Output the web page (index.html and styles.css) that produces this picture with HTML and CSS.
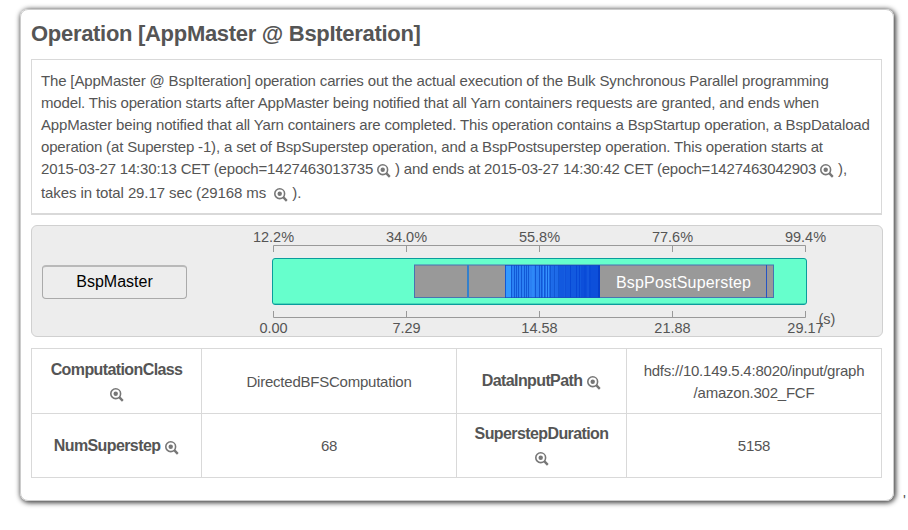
FILE: index.html
```
<!DOCTYPE html>
<html lang="en">
<head>
<meta charset="utf-8">
<title>Operation</title>
<link rel="stylesheet" href="styles.css">
</head>
<body>
<svg class="defs" aria-hidden="true"><symbol id="zoom" viewBox="0 0 14 14"><circle cx="5.7" cy="5.7" r="4.9" fill="none" stroke="#777" stroke-width="1.6"/><circle cx="5.7" cy="5.7" r="2.2" fill="#777"/><path d="M9.200 9.200L12.800 12.800" stroke="#777" stroke-width="2.400"/></symbol></svg>
<div class="page">
<main class="card">
<h1>Operation [AppMaster @ BspIteration]</h1>
<div class="description">
<span class="line">The [AppMaster @ BspIteration] operation carries out the actual execution of the Bulk Synchronous Parallel programming</span>
<span class="line">model. This operation starts after AppMaster being notified that all Yarn containers requests are granted, and ends when</span>
<span class="line">AppMaster being notified that all Yarn containers are completed. This operation contains a BspStartup operation, a BspDataload</span>
<span class="line">operation (at Superstep -1), a set of BspSuperstep operation, and a BspPostsuperstep operation. This operation starts at</span>
<span class="line dates">2015-03-27 14:30:13 CET (epoch=1427463013735 <svg class="icon"><use href="#zoom"/></svg> ) and ends at 2015-03-27 14:30:42 CET (epoch=1427463042903 <svg class="icon"><use href="#zoom"/></svg> ),</span>
<span class="line last">takes in total 29.17 sec (29168 ms &nbsp;<svg class="icon"><use href="#zoom"/></svg> ).</span>
</div>
<section class="chart">
<button class="actor">BspMaster</button>
<svg class="timeline" width="600" height="110" viewBox="250 226 600 110">
<g class="axis"><path d="M273.5 252V245.5H805.5V252M406.5 245V252M539.5 245V252M672.5 245V252M273.5 311V317.5H805.5V311M406.5 311V318M539.5 311V318M672.5 311V318"/></g>
<g class="ticks"><text x="273.5" y="242">12.2%</text><text x="406.5" y="242">34.0%</text><text x="539.5" y="242">55.8%</text><text x="672.5" y="242">77.6%</text><text x="805.5" y="242">99.4%</text>
<text x="273.5" y="333">0.00</text><text x="406.5" y="333">7.29</text><text x="539.5" y="333">14.58</text><text x="672.5" y="333">21.88</text><text x="805.5" y="333">29.17</text><text x="827" y="324">(s)</text></g>
<rect x="272.5" y="258.5" width="534" height="46" rx="2.5" fill="#66ffcc" stroke="#0a9c9c"/>
<path d="M273 303.500H806" stroke="#27b5a5" opacity=".5"/>
<rect x="414.500" y="265" width="359" height="32.500" fill="#999" stroke="#4873b0"/>
<path d="M468 265V298" stroke="#3380cc" stroke-width="2"/>
<rect x="505" y="265" width="95" height="33" fill="#2b80f3"/>
<rect x="506" y="265" width="5" height="33" fill="#3399ff"/>
<rect x="542" y="265" width="17" height="33" fill="#1e6cea"/>
<rect x="559" y="265" width="22" height="33" fill="#1259df"/>
<rect x="581" y="265" width="19" height="33" fill="#0d4fda"/>
<path d="M505.500 265V298M511.500 265V298M514.500 265V298M516.500 265V298M518.500 265V298M521.500 265V298M524.500 265V298M526.500 265V298M528.500 265V298M535.500 265V298M539.500 265V298M541.500 265V298M544.500 265V298M547.500 265V298M550.500 265V298M554.500 265V298M558.500 265V298" stroke="#1158d5"/>
<path d="M533 265V298M543.500 265V298M546.500 265V298M548.500 265V298" stroke="#3391fc"/>
<path d="M565.500 265V298M570.500 265V298M576.500 265V298M579.500 265V298M585 265V298M590 265V298" stroke="#0748d5"/>
<path d="M553 265V298M557 265V298M565 265V298M588 265V298" stroke="#2068e4" stroke-width=".7"/>
<path d="M599 265V298" stroke="#053fca" stroke-width="2"/>
<path d="M505 265.500H600M505 297.500H600" stroke="#194bbf" opacity=".7"/>
<path d="M766.500 265V298" stroke="#2454c4"/>
<text class="segment" x="683.500" y="288" textLength="135">BspPostSuperstep</text>
</svg>
</section>
<table>
<colgroup><col class="key"><col class="value"><col class="key"><col class="value"></colgroup>
<tr><th>ComputationClass <svg class="icon"><use href="#zoom"/></svg></th><td>DirectedBFSComputation</td><th>DataInputPath <svg class="icon"><use href="#zoom"/></svg></th><td>hdfs://10.149.5.4:8020/input/graph<br>/amazon.302_FCF</td></tr>
<tr><th>NumSuperstep <svg class="icon"><use href="#zoom"/></svg></th><td>68</td><th>SuperstepDuration <svg class="icon"><use href="#zoom"/></svg></th><td>5158</td></tr>
</table>
</main>
<span class="trail">'</span>
</div>
</body>
</html>
```
FILE: styles.css
```
* { box-sizing: border-box; }
body { margin: 0; background: #fff; color: #555; font: 15px/22px "Liberation Sans", Arial, sans-serif; }
.defs { position: absolute; width: 0; height: 0; }
.page { display: flex; align-items: flex-end; height: 530px; padding: 9px 0 29px 20px; }
.card { width: 874px; height: 492px; flex: none; padding: 10px 11px 10px 10px; border: 1px solid #ccc; border-radius: 8px; box-shadow: 1px 1px 5px 1px #444; }
h1 { margin: 0 0 11px; font-size: 22px; line-height: 28px; font-weight: bold; white-space: nowrap; letter-spacing: -.3px; }
.description { width: 851px; height: 156px; padding: 10px 9px; border: 1px solid #d9d9d9; border-bottom-width: 2px; letter-spacing: -.16px; }
.line { display: block; height: 22px; white-space: nowrap; }
.dates { letter-spacing: -.19px; }
.last { padding-top: 2px; letter-spacing: -.1px; }
.icon { width: 14px; height: 14px; vertical-align: -4px; }
.chart { display: flex; align-items: center; width: 852px; height: 112px; margin-top: 10px; padding-left: 10px; border: 1px solid #d0d0d0; border-radius: 6px; background: #ededed; }
.actor { width: 145px; height: 34px; margin: 1px 63px 0 0; padding: 0; border: 1px solid #aaa; border-top: 2px solid #b9b9b9; border-radius: 4px; background: #ededed; color: #000; font: 16px "Liberation Sans", Arial, sans-serif; }
.timeline { display: block; flex: none; }
.axis { fill: none; stroke: #999; }
.ticks { fill: #555; font-size: 14.5px; text-anchor: middle; }
.segment { fill: #fff; font-size: 16px; text-anchor: middle; }
table { width: 851px; height: 130px; margin-top: 11px; border-collapse: collapse; table-layout: fixed; }
.key { width: 170px; }
.value { width: 255px; }
th, td { height: 64.5px; padding: 0 10px; border: 1px solid #d9d9d9; text-align: center; }
th { font-size: 16px; line-height: 23px; letter-spacing: -.6px; }
th .icon { margin-left: 1px; }
td { padding-top: 2px; letter-spacing: -.23px; }
.trail { margin: 0 0 -10px 9px; }
```
